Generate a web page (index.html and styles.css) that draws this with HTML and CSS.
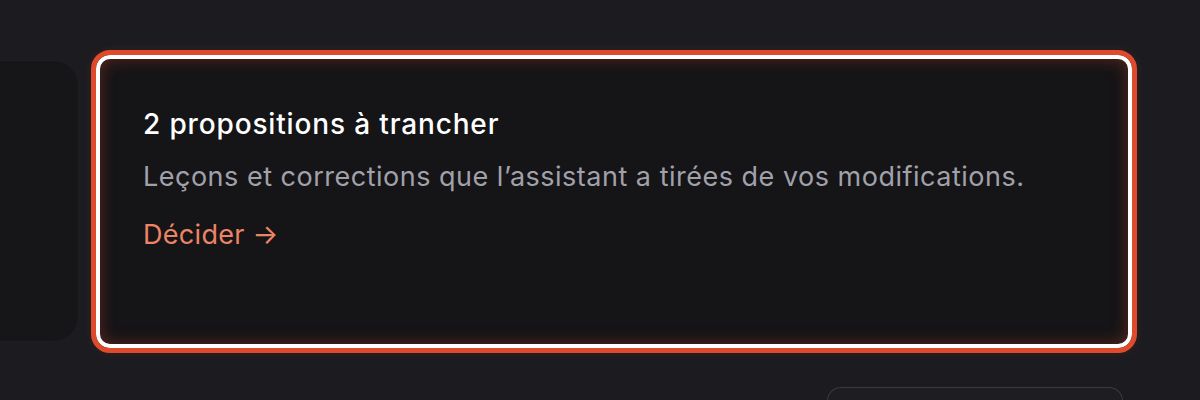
FILE: index.html
```html
<!DOCTYPE html>
<html lang="fr">
<head>
<meta charset="utf-8">
<link rel="stylesheet" href="styles.css">
</head>
<body>
<div class="stage">
  <div class="side-card"></div>
  <div class="card">
    <h2 class="title">2 propositions à trancher</h2>
    <p class="desc">Leçons et corrections que l’assistant a tirées de vos modifications.</p>
    <a class="link" href="#">Décider →</a>
  </div>
</div>
<div class="bottom-row">
  <div class="pill"></div>
</div>
</body>
</html>
```
FILE: styles.css
```css
html, body {
  margin: 0;
  padding: 0;
  background: #1c1c20;
  height: 400px;
  overflow: hidden;
  font-family: Inter, "Noto Sans", sans-serif;
}
.stage {
  display: flex;
  align-items: center;
  height: 302px;
  padding-top: 50px;
  gap: 18px;
  margin-left: -30px;
}
.side-card {
  width: 108px;
  height: 280px;
  flex: none;
  background: #161618;
  border-radius: 24px;
  box-shadow: 0 0 0 1px #1f1f23;
}
.card {
  flex: none;
  box-sizing: border-box;
  width: 1036px;
  height: 293px;
  border: 4px solid #ffffff;
  border-radius: 14px;
  outline: 5px solid #e04a2c;
  outline-offset: 0;
  background: #151417;
  box-shadow: inset 0 0 16px rgba(224, 74, 44, 0.35), 0 0 14px rgba(224, 74, 44, 0.25);
  padding: 49px 43px;
}
.title {
  margin: 0;
  font-size: 28px;
  font-weight: 500;
  letter-spacing: 0.85px;
  color: #ffffff;
  line-height: 32px;
}
.desc {
  margin: 21px 0 0;
  font-size: 27px;
  font-weight: 400;
  letter-spacing: 0.5px;
  color: #a1a1aa;
  line-height: 32px;
}
.link {
  display: inline-block;
  margin-top: 26px;
  font-size: 27px;
  letter-spacing: 0.3px;
  color: #ee8466;
  text-decoration: none;
  line-height: 32px;
}
.bottom-row {
  display: flex;
  justify-content: flex-end;
  padding-right: 77px;
  margin-top: 35px;
}
.pill {
  width: 296px;
  height: 14px;
  box-sizing: border-box;
  border: 1px solid #3a3a3f;
  border-bottom: none;
  border-radius: 16px 16px 0 0;
  background: #1e1e22;
}
```
